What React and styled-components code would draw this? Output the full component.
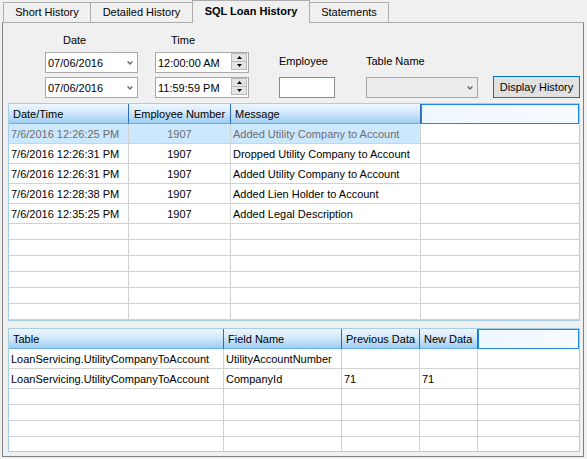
import React from "react"
import styled, { createGlobalStyle } from "styled-components"

const GlobalStyle = createGlobalStyle`
  html, body {
    margin: 0;
    padding: 0;
    background: #f0f0f0;
  }
  * {
    box-sizing: border-box;
  }
`

const Window = styled.div`
  width: 587px;
  height: 459px;
  overflow: hidden;
  background: #f0f0f0;
  font-family: "Liberation Sans", Arial, sans-serif;
  font-size: 11px;
  color: #000;
  display: flex;
  flex-direction: column;
`

const TabStrip = styled.div`
  display: flex;
  align-items: flex-end;
  height: 22px;
  padding-left: 4px;
`

const Tab = styled.div`
  position: relative;
  z-index: ${(p) => (p.$active ? 2 : 1)};
  width: ${(p) => p.$width}px;
  height: ${(p) => (p.$active ? 23 : 20)}px;
  margin-bottom: ${(p) => (p.$active ? -1 : 0)}px;
  margin-left: -1px;
  padding-top: ${(p) => (p.$active ? 1 : 0)}px;
  border: 1px solid #acacac;
  border-bottom: none;
  background: #f0f0f0;
  font-weight: ${(p) => (p.$active ? "bold" : "normal")};
  line-height: 18px;
  text-align: center;
  white-space: nowrap;
`

const Panel = styled.div`
  width: 582px;
  height: 435px;
  margin-left: 2px;
  border: 1px solid #7e7f80;
  border-top-color: #acacac;
  padding: 10px 3px 0 5px;
  display: flex;
  flex-direction: column;
`

const Controls = styled.div`
  display: grid;
  grid-template-columns: 93px 17px 94px 30px 56px 31px 112px 15px 87px;
  grid-template-rows: 19px 21px 25px;
  margin-left: 37px;
`

const Label = styled.div`
  grid-column: ${(p) => p.$col};
  grid-row: ${(p) => p.$row};
  padding-left: ${(p) => p.$indent || 0}px;
  padding-top: ${(p) => p.$top || 0}px;
  line-height: 13px;
  white-space: nowrap;
`

const Field = styled.div`
  grid-column: ${(p) => p.$col};
  grid-row: ${(p) => p.$row};
  margin-top: ${(p) => (p.$row === 3 ? 4 : 0)}px;
  height: 21px;
  display: flex;
  align-items: center;
  padding-left: 2px;
  background: ${(p) => (p.$disabled ? "#ececec" : "#fff")};
  border: 1px solid ${(p) => (p.$dark ? "#8a8a8a" : "#a8a8a8")};
  white-space: nowrap;
`

const FieldText = styled.span`
  flex: 1;
`

const Chevron = styled.svg`
  margin-right: 4px;
  flex-shrink: 0;
`

const Spin = styled.div`
  align-self: stretch;
  width: 16px;
  margin: 0 1px 2px 0;
  display: flex;
  flex-direction: column;
  border: 1px solid #b9b9b9;
  background: #e4e4e4;
`

const SpinHalf = styled.div`
  flex: 1;
  display: flex;
  align-items: center;
  justify-content: center;
  border-top: ${(p) => (p.$lower ? "1px solid #b9b9b9" : "none")};
`

const Button = styled.button`
  grid-column: 9;
  grid-row: 3;
  margin-top: 3px;
  height: 22px;
  padding: 0;
  border: 1px solid #0078d7;
  background: #e1e1e1;
  font-family: inherit;
  font-size: 11px;
  color: #000;
`

const Grid = styled.div`
  display: grid;
  grid-template-columns: ${(p) => p.$cols};
  grid-template-rows: ${(p) => p.$rows};
  height: ${(p) => p.$height}px;
  margin-top: ${(p) => p.$gap}px;
  overflow: hidden;
  border: 1px solid #a5d0e3;
  background: #fff;
`

const HeadCell = styled.div`
  display: flex;
  align-items: center;
  justify-content: ${(p) => (p.$center ? "center" : "flex-start")};
  padding-left: ${(p) => (p.$center ? 0 : 4)}px;
  background: linear-gradient(#eef7fe, #cfe7fa 50%, #9ecdf1);
  border-right: 1px solid #2a6cbf;
  border-bottom: 1px solid #6eaee6;
  white-space: nowrap;
  overflow: hidden;
`

const FocusHead = styled.div`
  background: linear-gradient(90deg, #eef7fe, #f6fbff);
  border: 1px solid #1f87e8;
`

const Cell = styled.div`
  display: flex;
  align-items: center;
  justify-content: ${(p) => (p.$center ? "center" : "flex-start")};
  padding-left: ${(p) => (p.$center ? 0 : 2)}px;
  border-bottom: 1px solid #d2d2d2;
  border-right: ${(p) => (p.$last ? "none" : "1px solid #d2d2d2")};
  background: ${(p) => (p.$selected ? "#cce8ff" : "#fff")};
  color: ${(p) => (p.$selected ? "#6d6d6d" : "#000")};
  white-space: nowrap;
  overflow: hidden;
`

const ChevronIcon = () => (
  <Chevron width="6" height="4" viewBox="0 0 6 4">
    <polyline points="0.6,0.6 3,3 5.4,0.6" fill="none" stroke="#5f6b78" strokeWidth="1.4" />
  </Chevron>
)

const SpinBox = () => (
  <Spin>
    <SpinHalf>
      <svg width="5" height="3" viewBox="0 0 5 3">
        <polygon points="2.5,0 5,3 0,3" fill="#000" />
      </svg>
    </SpinHalf>
    <SpinHalf $lower>
      <svg width="5" height="3" viewBox="0 0 5 3">
        <polygon points="0,0 5,0 2.5,3" fill="#000" />
      </svg>
    </SpinHalf>
  </Spin>
)

const history = [
  ["7/6/2016 12:26:25 PM", "1907", "Added Utility Company to Account"],
  ["7/6/2016 12:26:31 PM", "1907", "Dropped Utility Company to Account"],
  ["7/6/2016 12:26:31 PM", "1907", "Added Utility Company to Account"],
  ["7/6/2016 12:28:38 PM", "1907", "Added Lien Holder to Account"],
  ["7/6/2016 12:35:25 PM", "1907", "Added Legal Description"],
]

const changes = [
  ["LoanServicing.UtilityCompanyToAccount", "UtilityAccountNumber", "", ""],
  ["LoanServicing.UtilityCompanyToAccount", "CompanyId", "71", "71"],
]

const HistoryGrid = () => {
  const blanks = Array.from({ length: 6 })
  return (
    <Grid
      $cols="120px 102px 190px 1fr"
      $rows="20px repeat(5, 20px) repeat(6, 16px)"
      $height={218}
      $gap={5}
    >
      <HeadCell>Date/Time</HeadCell>
      <HeadCell $center>Employee Number</HeadCell>
      <HeadCell>Message</HeadCell>
      <FocusHead />
      {history.map((row, i) => (
        <React.Fragment key={i}>
          <Cell $selected={i === 0}>{row[0]}</Cell>
          <Cell $selected={i === 0} $center>{row[1]}</Cell>
          <Cell $selected={i === 0}>{row[2]}</Cell>
          <Cell $last />
        </React.Fragment>
      ))}
      {blanks.map((_, i) => (
        <React.Fragment key={"b" + i}>
          <Cell />
          <Cell />
          <Cell />
          <Cell $last />
        </React.Fragment>
      ))}
    </Grid>
  )
}

const ChangesGrid = () => {
  const blanks = Array.from({ length: 4 })
  return (
    <Grid
      $cols="215px 118px 78px 58px 1fr"
      $rows="20px repeat(2, 20px) repeat(4, 16px)"
      $height={124}
      $gap={7}
    >
      <HeadCell>Table</HeadCell>
      <HeadCell>Field Name</HeadCell>
      <HeadCell>Previous Data</HeadCell>
      <HeadCell>New Data</HeadCell>
      <FocusHead />
      {changes.map((row, i) => (
        <React.Fragment key={i}>
          {row.map((value, j) => (
            <Cell key={j}>{value}</Cell>
          ))}
          <Cell $last />
        </React.Fragment>
      ))}
      {blanks.map((_, i) => (
        <React.Fragment key={"b" + i}>
          <Cell />
          <Cell />
          <Cell />
          <Cell />
          <Cell $last />
        </React.Fragment>
      ))}
    </Grid>
  )
}

export default function App() {
  return (
    <>
      <GlobalStyle />
      <Window>
        <TabStrip>
          <Tab $width={88}>Short History</Tab>
          <Tab $width={103}>Detailed History</Tab>
          <Tab $width={118} $active>
            SQL Loan History
          </Tab>
          <Tab $width={80}>Statements</Tab>
        </TabStrip>
        <Panel>
          <Controls>
            <Label $col={1} $row={1} $indent={18} $top={1}>
              Date
            </Label>
            <Label $col={3} $row={1} $indent={16} $top={1}>
              Time
            </Label>

            <Field $col={1} $row={2}>
              <FieldText>07/06/2016</FieldText>
              <ChevronIcon />
            </Field>
            <Field $col={3} $row={2}>
              <FieldText>12:00:00 AM</FieldText>
              <SpinBox />
            </Field>
            <Label $col={5} $row={2} $top={3}>
              Employee
            </Label>
            <Label $col={7} $row={2} $top={3}>
              Table Name
            </Label>

            <Field $col={1} $row={3}>
              <FieldText>07/06/2016</FieldText>
              <ChevronIcon />
            </Field>
            <Field $col={3} $row={3}>
              <FieldText>11:59:59 PM</FieldText>
              <SpinBox />
            </Field>
            <Field $col={5} $row={3} $dark />
            <Field $col={7} $row={3} $disabled>
              <FieldText />
              <ChevronIcon />
            </Field>
            <Button>Display History</Button>
          </Controls>
          <HistoryGrid />
          <ChangesGrid />
        </Panel>
      </Window>
    </>
  )
}
